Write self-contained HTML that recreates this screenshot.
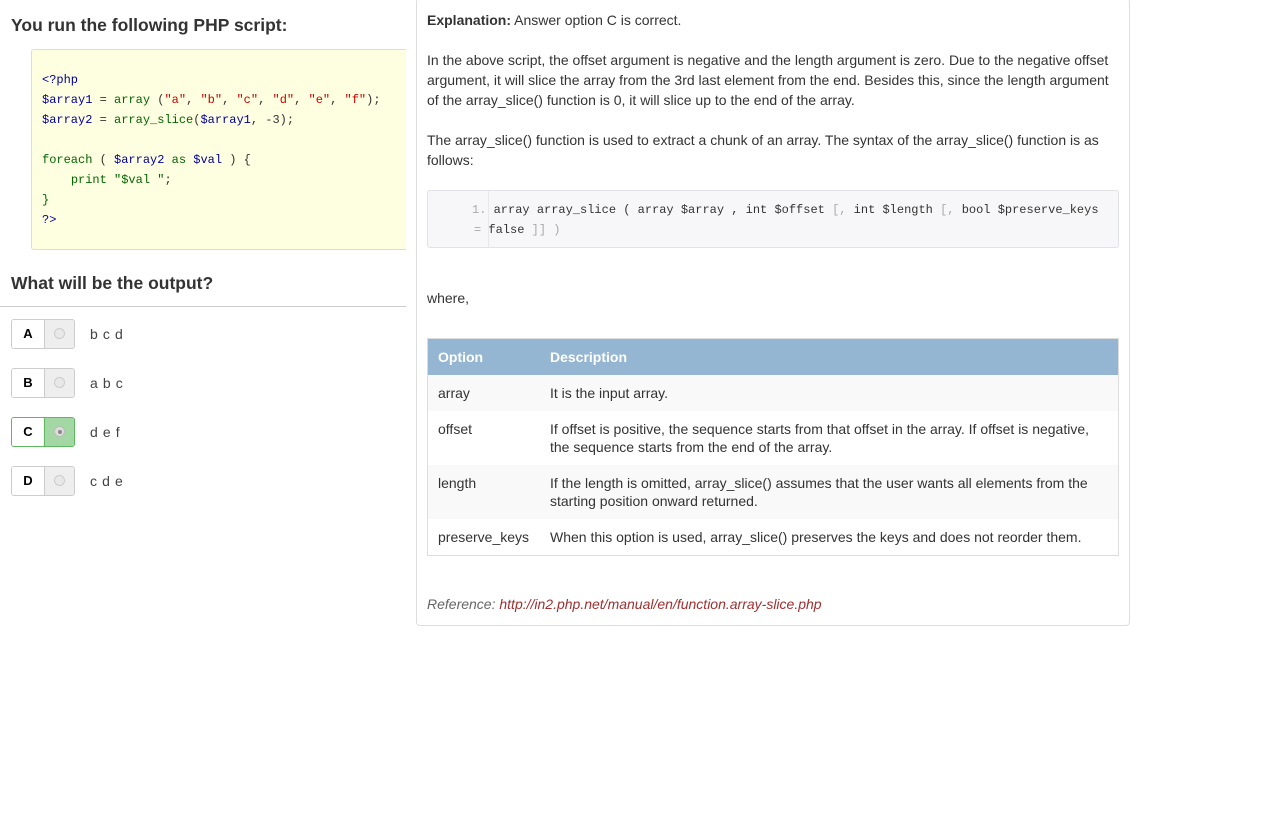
<!DOCTYPE html>
<html><head><meta charset="utf-8"><style>
body{margin:0;background:#fff;font-family:"Liberation Sans",Arial,sans-serif;color:#333;width:1274px;height:815px;overflow:hidden;position:relative}
.a{position:absolute}
h1{position:absolute;margin:0;font-size:17.5px;font-weight:bold;left:11px}
.code{left:31px;top:49px;width:375px;height:201px;background:#fefee0;border:1px solid #ddd;border-right:none;border-radius:3px 0 0 3px;font-family:"Liberation Mono",monospace;font-size:12px;line-height:20px;padding-top:20px;box-sizing:border-box;padding-left:10px;white-space:pre;overflow:hidden}
.k{color:#006600}.v{color:#000099}.s{color:#cc0000}
.opt{left:11px;width:62px;height:28px;border:1px solid #ccc;border-radius:3px;overflow:hidden}
.opt .l{position:absolute;left:0;top:0;width:32px;height:28px;background:#fff;border-right:1px solid #ccc;text-align:center;font-weight:bold;font-size:13px;line-height:28px;color:#000}
.opt .r{position:absolute;left:33px;top:0;width:29px;height:28px;background:#eee}
.opt .r i{position:absolute;left:9px;top:8px;width:11px;height:11px;border-radius:50%;border:1px solid #ccc;background:#e8e8e8;box-sizing:border-box}
.ot{left:90px;font-size:14px;color:#444;letter-spacing:0.6px}
.panel{left:416px;top:-2px;width:712px;height:626px;border:1px solid #ddd;border-radius:4px}
.p{left:427px;font-size:14px;line-height:20px;width:700px}
.pre{left:427px;top:190px;width:692px;height:58px;background:#f7f7f9;border:1px solid #e1e1e8;border-radius:3px;font-family:"Liberation Mono",monospace;font-size:12px;line-height:20px;color:#333;box-sizing:border-box;padding:9px 0 0 0;white-space:nowrap}
table{position:absolute;left:427px;top:338px;width:692px;border-collapse:collapse;font-size:14px;border:1px solid #ddd}
th{background:#94b6d3;color:#fff;text-align:left;height:36px;padding:0 10px;font-weight:bold}
td{padding:9px 10px;line-height:18px;vertical-align:top}
tr:nth-child(even) td{background:#f9f9f9}
</style></head><body>
<h1 style="top:15px">You run the following PHP script:</h1>
<div class="a code"><span class="v">&lt;?php</span>
<span class="v">$array1</span> = <span class="k">array</span> (<span class="s">"a"</span>, <span class="s">"b"</span>, <span class="s">"c"</span>, <span class="s">"d"</span>, <span class="s">"e"</span>, <span class="s">"f"</span>);
<span class="v">$array2</span> = <span class="k">array_slice</span>(<span class="v">$array1</span>, -3);

<span class="k">foreach</span> ( <span class="v">$array2</span> <span class="k">as</span> <span class="v">$val</span> ) {
    <span class="k">print</span> <span class="k">"$val "</span>;
<span class="k">}</span>
<span class="v">?&gt;</span></div>
<h1 style="top:273px">What will be the output?</h1>
<div class="a" style="left:0;top:306px;width:406px;height:1px;background:#ccc"></div>

<div class="a opt" style="top:319px"><div class="l">A</div><div class="r"><i></i></div></div><div class="a ot" style="top:326px">b c d</div>
<div class="a opt" style="top:368px"><div class="l">B</div><div class="r"><i></i></div></div><div class="a ot" style="top:375px">a b c</div>
<div class="a opt" style="top:417px;border-color:#5cb85c"><div class="l" style="border-color:#5cb85c">C</div><div class="r" style="background:#a3d7a3"><i style="background:#ddd;border-color:#bbb"><b style="position:absolute;left:2.5px;top:2.5px;width:4px;height:4px;border-radius:50%;background:#888"></b></i></div></div><div class="a ot" style="top:424px">d e f</div>
<div class="a opt" style="top:466px"><div class="l">D</div><div class="r"><i></i></div></div><div class="a ot" style="top:473px">c d e</div>

<div class="a panel"></div>
<div class="a p" style="top:10px"><b>Explanation:</b> Answer option C is correct.</div>
<div class="a p" style="top:50px">In the above script, the offset argument is negative and the length argument is zero. Due to the negative offset<br>argument, it will slice the array from the 3rd last element from the end. Besides this, since the length argument<br>of the array_slice() function is 0, it will slice up to the end of the array.</div>
<div class="a p" style="top:130px">The array_slice() function is used to extract a chunk of an array. The syntax of the array_slice() function is as<br>follows:</div>
<div class="a pre"><div class="a" style="left:60px;top:0;width:1px;height:56px;background:#e8e8ec"></div><span style="padding-left:44px;color:#aaa">1.</span>  array array_slice ( array $array , int $offset <span style="color:#aaa">[,</span> int $length <span style="color:#aaa">[,</span> bool $preserve_keys<br><span style="padding-left:46px;color:#aaa">=</span> false <span style="color:#aaa">]] )</span></div>
<div class="a p" style="top:288px">where,</div>
<table>
<tr><th style="width:92px">Option</th><th>Description</th></tr>
<tr><td>array</td><td>It is the input array.</td></tr>
<tr><td>offset</td><td>If offset is positive, the sequence starts from that offset in the array. If offset is negative,<br>the sequence starts from the end of the array.</td></tr>
<tr><td>length</td><td>If the length is omitted, array_slice() assumes that the user wants all elements from the<br>starting position onward returned.</td></tr>
<tr><td>preserve_keys</td><td>When this option is used, array_slice() preserves the keys and does not reorder them.</td></tr>
</table>
<div class="a p" style="top:594px;font-style:italic;color:#666">Reference: <span style="color:#a03030">http://in2.php.net/manual/en/function.array-slice.php</span></div>
</body></html>
